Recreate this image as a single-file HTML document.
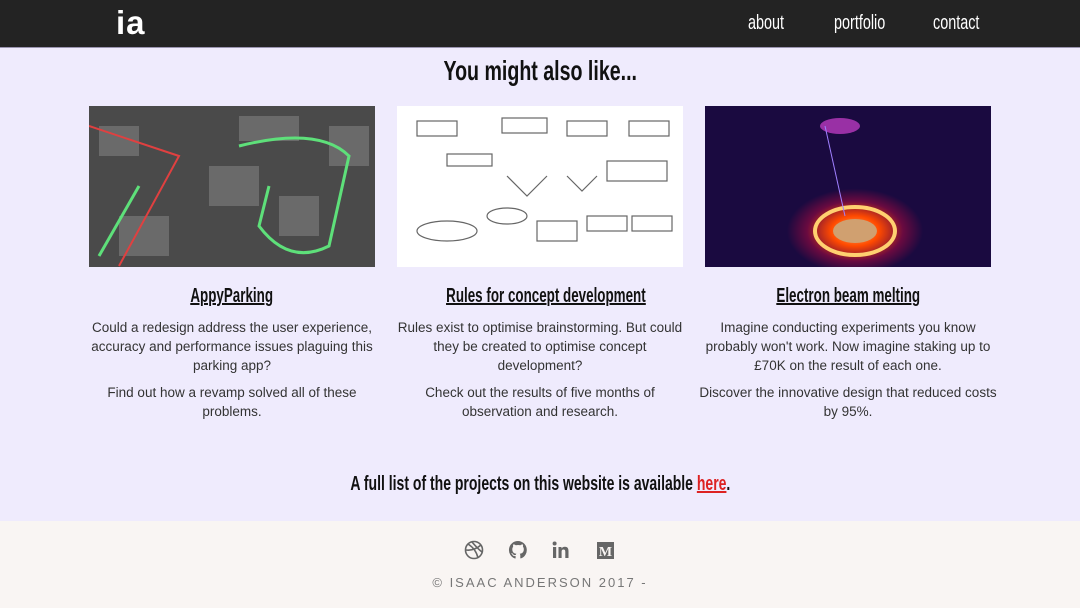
<!DOCTYPE html>
<html><head><style>
*{margin:0;padding:0;box-sizing:border-box}
body{width:1080px;height:608px;overflow:hidden;background:#efebfd;font-family:"Liberation Sans",sans-serif;position:relative}
.hd{position:absolute;left:0;top:0;width:1080px;height:48px;background:#232323;border-bottom:1px solid #9a94b0}
.logo{position:absolute;left:116px;top:4px;color:#fff;font-weight:bold;font-size:33px;letter-spacing:1px}
.nav{position:absolute;top:12px;color:#fff;font-size:20px;transform:scaleX(.72);transform-origin:left;white-space:nowrap}
.c{display:inline-block;transform:scaleX(.7);white-space:nowrap}
.cond{font-weight:bold}
h1{position:absolute;top:55px;width:100%;text-align:center;font-size:28px;color:#111}
.img{position:absolute;top:106px;width:286px;height:161px;overflow:hidden}
.t{position:absolute;top:285px;width:286px;text-align:center;font-size:20px;color:#111}
.t span{text-decoration:underline}
.p{position:absolute;top:318px;width:300px;text-align:center;font-size:13.5px;line-height:19px;color:#333}
.p div{margin-bottom:8px}
.full{position:absolute;top:473px;width:100%;text-align:center;font-size:20px;color:#111}
.ft{position:absolute;left:0;top:521px;width:1080px;height:87px;background:#f9f5f3}
.copy{position:absolute;top:575px;width:100%;text-align:center;color:#777;font-size:13px;letter-spacing:2px}
</style></head><body>
<div class="hd"><div class="logo">ia</div>
<div class="nav" style="left:748px">about</div><div class="nav" style="left:834px">portfolio</div><div class="nav" style="left:933px">contact</div></div>
<h1 class="cond"><span class="c">You might also like...</span></h1>
<div class="img" style="left:89px;background:#4a4a4a">
<svg width="286" height="161"><g fill="#6a6a6a"><rect x="10" y="20" width="40" height="30"/><rect x="120" y="60" width="50" height="40"/><rect x="190" y="90" width="40" height="40"/><rect x="30" y="110" width="50" height="40"/><rect x="240" y="20" width="40" height="40"/><rect x="150" y="10" width="60" height="25"/></g>
<path d="M150 40 Q230 20 260 50 L240 140 Q200 160 170 120 L180 80" stroke="#5ee07a" stroke-width="3" fill="none"/><path d="M0 20 L90 50 L30 160" stroke="#e04040" stroke-width="2" fill="none"/><path d="M50 80 L10 150" stroke="#5ee07a" stroke-width="3"/></svg></div>
<div class="img" style="left:397px;background:#fff">
<svg width="286" height="161" stroke="#666" fill="none"><g stroke-width="1.2"><rect x="20" y="15" width="40" height="15"/><rect x="105" y="12" width="45" height="15"/><rect x="170" y="15" width="40" height="15"/><rect x="232" y="15" width="40" height="15"/><rect x="50" y="48" width="45" height="12"/><rect x="210" y="55" width="60" height="20"/><ellipse cx="50" cy="125" rx="30" ry="10"/><ellipse cx="110" cy="110" rx="20" ry="8"/><rect x="140" y="115" width="40" height="20"/><rect x="190" y="110" width="40" height="15"/><rect x="235" y="110" width="40" height="15"/><path d="M110 70 L130 90 L150 70 M170 70 L185 85 L200 70"/></g></svg></div>
<div class="img" style="left:705px;background:radial-gradient(ellipse 80px 50px at 150px 125px,#ffb060 0%,#ff4a00 30%,#6a0a40 60%,#1a0a40 85%),#120a35">
<svg width="286" height="161"><ellipse cx="150" cy="125" rx="40" ry="24" fill="none" stroke="#ffd070" stroke-width="4"/><ellipse cx="150" cy="125" rx="22" ry="12" fill="#d0a070"/><ellipse cx="135" cy="20" rx="20" ry="8" fill="#d040d0" opacity=".7"/><line x1="120" y1="20" x2="140" y2="110" stroke="#a080ff" stroke-width="1"/></svg></div>
<div class="t cond" style="left:89px"><span class="c" style="transform:scaleX(.67)"><span>AppyParking</span></span></div>
<div class="t cond" style="left:397px"><span class="c" style="transform:scaleX(.67)"><span>Rules for concept development</span></span></div>
<div class="t cond" style="left:705px"><span class="c" style="transform:scaleX(.67)"><span>Electron beam melting</span></span></div>
<div class="p" style="left:82px"><div>Could a redesign address the user experience, accuracy and performance issues plaguing this parking app?</div><div>Find out how a revamp solved all of these problems.</div></div>
<div class="p" style="left:390px"><div>Rules exist to optimise brainstorming. But could they be created to optimise concept development?</div><div>Check out the results of five months of observation and research.</div></div>
<div class="p" style="left:698px"><div>Imagine conducting experiments you know probably won't work. Now imagine staking up to £70K on the result of each one.</div><div>Discover the innovative design that reduced costs by 95%.</div></div>
<div class="full cond"><span class="c">A full list of the projects on this website is available <span style="color:#d22;text-decoration:underline">here</span>.</span></div>
<div class="ft"></div>
<svg style="position:absolute;left:464px;top:539px" width="160" height="22">
<g stroke="#666" stroke-width="1.6" fill="none"><circle cx="10" cy="11" r="8.5"/><path d="M4 5 Q12 10 14 19 M2 11 Q10 12 17 6 M8 3 Q14 10 18 13"/></g>
<path d="M54 2a9 9 0 0 0-3 17.5c.5 0 .6-.2.6-.5v-2c-2.5.5-3-1-3-1-.4-1-1-1.3-1-1.3-.8-.6.1-.6.1-.6.9.1 1.4 1 1.4 1 .8 1.4 2.2 1 2.7.8.1-.6.3-1 .6-1.2-2-.2-4.1-1-4.1-4.5 0-1 .4-1.8.9-2.4-.1-.2-.4-1.200.1-2.4 0 0 .8-.2 2.5.9a8.6 8.6 0 0 1 4.5 0c1.7-1.1 2.5-.9 2.5-.9.5 1.2.2 2.2.1 2.4.6.6.9 1.4.9 2.4 0 3.5-2.1 4.3-4.1 4.5.3.3.6.8.6 1.6v2.6c0 .3.2.6.7.5A9 9 0 0 0 54 2z" fill="#666"/>
<g fill="#666"><rect x="89" y="8" width="3.2" height="11"/><circle cx="90.6" cy="4.5" r="2"/><path d="M94.5 8h3v1.5c.6-1 1.7-1.8 3.4-1.8 3 0 3.6 2 3.6 4.6V19h-3.2v-5.8c0-1.3-.1-2.7-1.8-2.7s-1.9 1.3-1.9 2.6V19h-3.1z"/><rect x="133" y="3" width="17" height="17"/></g>
<text x="141.5" y="17" text-anchor="middle" font-family="Liberation Serif" font-weight="bold" font-size="14" fill="#f9f5f3">M</text></svg>
<div class="copy">© ISAAC ANDERSON 2017 -</div>
</body></html>
